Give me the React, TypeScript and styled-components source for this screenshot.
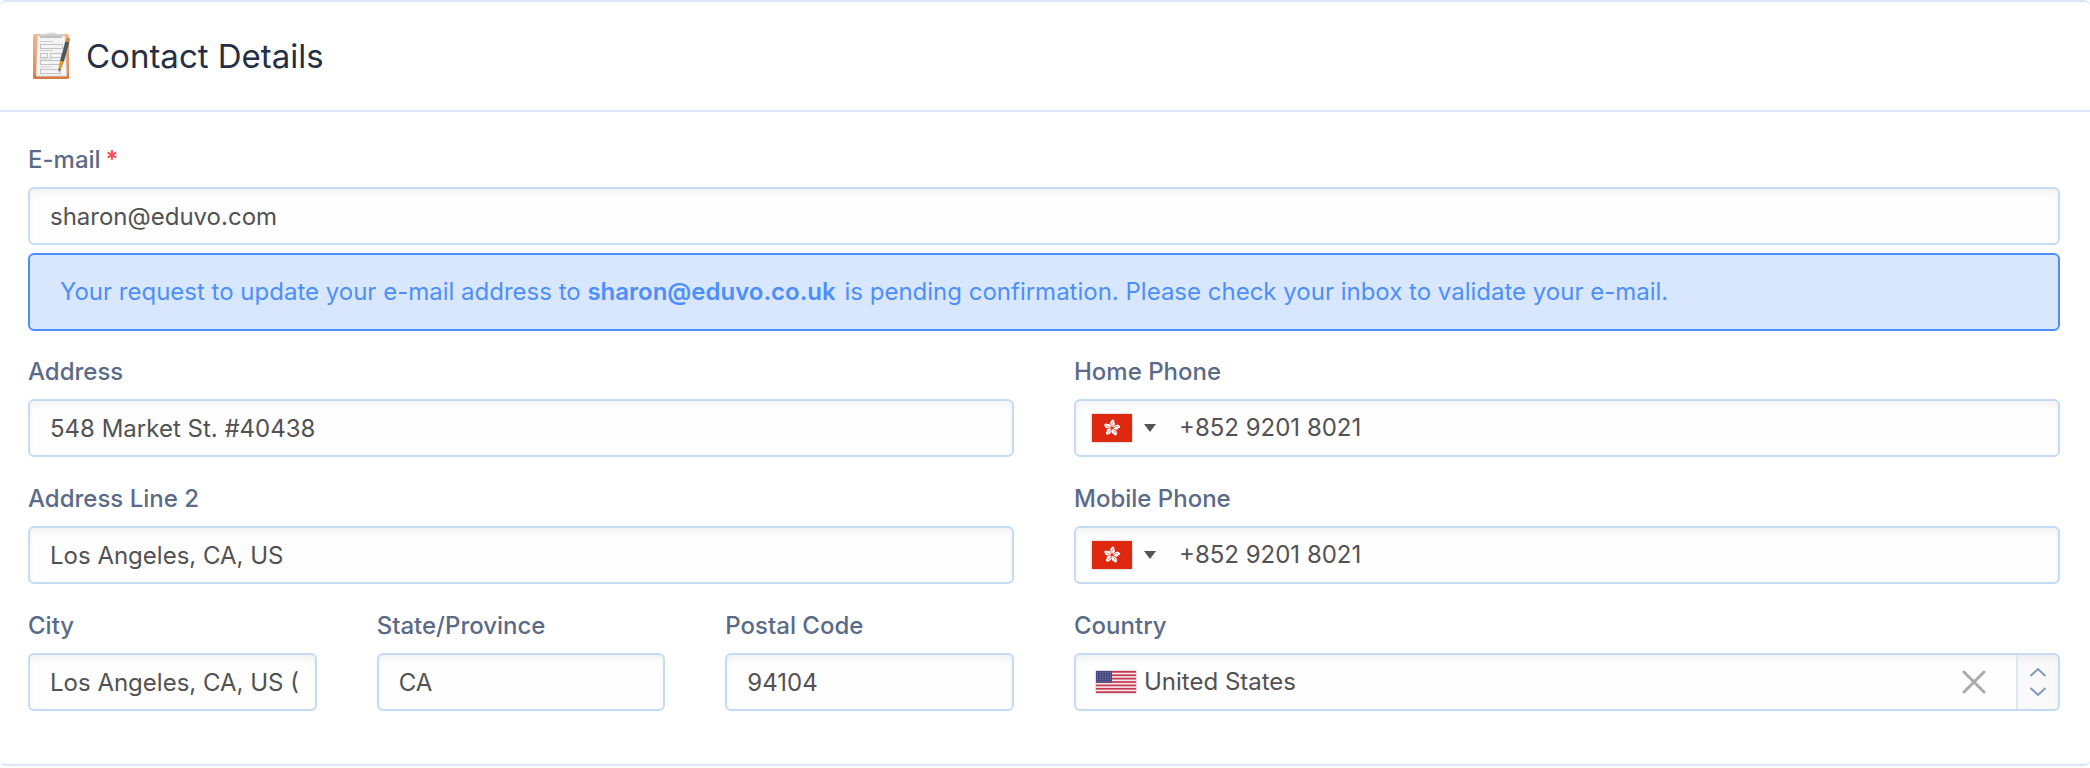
import React, { useState } from "react";
import styled, { createGlobalStyle } from "styled-components";

const GlobalStyle = createGlobalStyle`
  *, *::before, *::after { box-sizing: border-box; }
  body {
    margin: 0;
    background: #ffffff;
    color: #525252;
    font-family: Inter, "Liberation Sans", sans-serif;
    font-size: 24px;
    line-height: 32px;
  }
  button, input, select { font: inherit; color: inherit; margin: 0; }
`;

const Card = styled.section`
  border-top: 2px solid #d9e7f7;
  border-bottom: 2px solid #d9e7f7;
  border-radius: 6px;
  background: #ffffff;
`;

const CardHeader = styled.header`
  display: flex;
  align-items: center;
  gap: 14px;
  padding: 30px 28px 30px 32px;
  border-bottom: 2px solid #d9e7f7;
`;

const Title = styled.h2`
  margin: 0;
  font-size: 33px;
  line-height: 48px;
  font-weight: 400;
  color: #262f45;
`;

const Form = styled.form`
  display: flex;
  flex-direction: column;
  gap: 25px;
  padding: 32px 30px 53px 28px;
`;

const Columns = styled.div<{ $count: number }>`
  display: grid;
  grid-template-columns: repeat(${(p) => p.$count}, minmax(0, 1fr));
  gap: 26px 60px;
`;

const Field = styled.div`
  display: flex;
  flex-direction: column;
  min-width: 0;
`;

const Label = styled.label`
  height: 43px;
  font-weight: 500;
  color: #5a6b88;
`;

const Required = styled.span`
  margin-left: 5px;
  font-weight: 600;
  color: #fb4b50;
`;

const TextInput = styled.input`
  width: 100%;
  height: 58px;
  padding: 0 16px 0 20px;
  border: 2px solid #c3dbf4;
  border-radius: 6px;
  background: #fefefe;
  box-shadow: inset 0 5px 8px -2px rgba(0, 0, 0, 0.06);
  outline-color: #4c8ffb;
`;

const Control = styled.div`
  display: flex;
  align-items: center;
  height: 58px;
  border: 2px solid #c3dbf4;
  border-radius: 6px;
  background: #fefefe;
  box-shadow: inset 0 5px 8px -2px rgba(0, 0, 0, 0.06);
`;

const DialCodeButton = styled.button`
  display: flex;
  align-items: center;
  gap: 12px;
  align-self: stretch;
  padding: 0 12px 0 16px;
  border: 0;
  background: transparent;
`;

const BareInput = styled.input`
  flex: 1;
  min-width: 0;
  align-self: stretch;
  padding: 0 16px 0 11px;
  border: 0;
  background: transparent;
`;

const CountryFlag = styled.span`
  display: flex;
  padding: 0 8px 0 20px;
`;

const BareSelect = styled.select`
  flex: 1;
  min-width: 0;
  align-self: stretch;
  padding: 0;
  border: 0;
  background: transparent;
  appearance: none;
`;

const ClearButton = styled.button`
  display: flex;
  align-items: center;
  align-self: stretch;
  padding: 0 30px;
  border: 0;
  background: transparent;
`;

const StepperButton = styled.button`
  display: flex;
  align-items: center;
  justify-content: center;
  align-self: stretch;
  width: 42px;
  padding: 0;
  border: 0;
  border-left: 2px solid #d9e7f7;
  border-radius: 0 4px 4px 0;
  background: rgba(0, 0, 0, 0.02);
`;

const Notice = styled.p`
  margin: 8px 0 0;
  padding: 21px 30px;
  border: 2px solid #4c8ffb;
  border-radius: 6px;
  background: #d9e7fe;
  color: #4c8ffb;

  strong {
    margin-right: 2px;
    font-weight: 600;
  }
`;

const Svg = styled.svg`
  display: block;
  flex: none;
`;

const FlagSvg = styled(Svg)`
  box-shadow: 0 0 2px rgba(0, 0, 0, 0.35);
`;

function ClipboardIcon() {
  return (
    <Svg width="40" height="48" viewBox="0 0 40 48" aria-hidden="true">
      <defs>
        <linearGradient id="board" x1="0" y1="0" x2="0" y2="1">
          <stop offset="0" stopColor="#f0b990" />
          <stop offset="1" stopColor="#de8048" />
        </linearGradient>
        <linearGradient id="clip" x1="0" y1="0" x2="0" y2="1">
          <stop offset="0" stopColor="#e3e3e3" />
          <stop offset="1" stopColor="#b8b8b8" />
        </linearGradient>
      </defs>
      <rect x="1" y="2" width="36" height="45" rx="2" fill="url(#board)" />
      <path d="M1 44h36v1a2 2 0 0 1-2 2H3a2 2 0 0 1-2-2z" fill="#d67a42" />
      <path d="M5.500 4H33l1.500 40H4.500z" fill="#f4f4f4" stroke="#dedad7" strokeWidth="1" />
      <path d="M8 6V3q0-1 1-1h5q1-1.500 3-1.500h5q2 0 3 1.500h4q1 0 1 1v3z" fill="url(#clip)" />
      <g fill="none" stroke="#c2c2c2" strokeWidth="1">
        <path d="M8 9.500h13M8 18.500h13M8 26.900h12M8 34.900h12" stroke="#cecece" />
        <rect x="8.500" y="12.500" width="22" height="4" />
        <rect x="8.500" y="21.500" width="7" height="4" />
        <rect x="18.500" y="21.500" width="11" height="4" />
        <rect x="8.500" y="28.500" width="20" height="4" />
        <rect x="8.500" y="37.500" width="20" height="4" />
      </g>
      <path d="M34.800 5.500l3.400 1-.9 4-3.900-.8z" fill="#c98a3b" />
      <path d="M33.300 9.500l4 .9-5.500 19.500-3.800-1z" fill="#4c5661" />
      <path d="M28 28.800l3.800 1-2.600 7.200-2.800-.8z" fill="#e39a2d" />
      <path d="M26.400 36.200l2.800.8-2.400 3z" fill="#6b5a48" />
    </Svg>
  );
}

function HongKongFlag() {
  return (
    <FlagSvg width="40" height="28" viewBox="0 0 40 28" aria-hidden="true">
      <rect width="40" height="28" fill="#de2910" />
      {[10, 82, 154, 226, 298].map((angle) => (
        <g key={angle} transform={`translate(20 14) rotate(${angle})`}>
          <path d="M0-1C-3-3-3.800-6.500-.5-8.500 1-8 1.500-7 1-6 3-5.500 2.500-2.500 0-1z" fill="#fff" />
          <path d="M0-1.500Q-1.200-3.500-.6-6" fill="none" stroke="#de2910" strokeWidth=".5" />
        </g>
      ))}
    </FlagSvg>
  );
}

function UnitedStatesFlag() {
  return (
    <FlagSvg width="40" height="22" viewBox="0 0 40 22" aria-hidden="true">
      <rect width="40" height="22" fill="#f5e6e8" />
      <g fill="#c5374f">
        {[0, 1, 2, 3, 4, 5, 6].map((i) => (
          <rect key={i} y={(i * 44) / 13} width="40" height={22 / 13} />
        ))}
      </g>
      <rect width="16" height="11.800" fill="#46467f" />
      <g fill="#8787ad">
        {[0, 1, 2, 3, 4].map((row) =>
          [0, 1, 2, 3, 4, 5].map((col) => (
            <circle key={`${row}-${col}`} cx={1.6 + col * 2.6} cy={1.4 + row * 2.25} r=".55" />
          )),
        )}
      </g>
    </FlagSvg>
  );
}

function PhoneField({ id, label, value }: { id: string; label: string; value: string }) {
  return (
    <Field>
      <Label htmlFor={id}>{label}</Label>
      <Control>
        <DialCodeButton type="button" aria-label={`${label} country code`}>
          <HongKongFlag />
          <Svg width="12" height="8" viewBox="0 0 12 8" aria-hidden="true">
            <path d="M0 0h12L6 8z" fill="#555" />
          </Svg>
        </DialCodeButton>
        <BareInput id={id} type="tel" defaultValue={value} />
      </Control>
    </Field>
  );
}

function TextField({ id, label, value }: { id: string; label: string; value: string }) {
  return (
    <Field>
      <Label htmlFor={id}>{label}</Label>
      <TextInput id={id} type="text" defaultValue={value} />
    </Field>
  );
}

export default function App() {
  const [country, setCountry] = useState("US");

  return (
    <>
      <GlobalStyle />
      <Card>
        <CardHeader>
          <ClipboardIcon />
          <Title>Contact Details</Title>
        </CardHeader>
        <Form>
          <Field>
            <Label htmlFor="email">
              E-mail
              <Required>*</Required>
            </Label>
            <TextInput id="email" type="email" required defaultValue="sharon@eduvo.com" />
            <Notice>
              Your request to update your e-mail address to <strong>sharon@eduvo.co.uk</strong> is
              pending confirmation. Please check your inbox to validate your e-mail.
            </Notice>
          </Field>
          <Columns $count={2}>
            <TextField id="address" label="Address" value="548 Market St. #40438" />
            <PhoneField id="home-phone" label="Home Phone" value="+852 9201 8021" />
            <TextField id="address-2" label="Address Line 2" value="Los Angeles, CA, US" />
            <PhoneField id="mobile-phone" label="Mobile Phone" value="+852 9201 8021" />
            <Columns $count={3}>
              <TextField id="city" label="City" value="Los Angeles, CA, US (" />
              <TextField id="state" label="State/Province" value="CA" />
              <TextField id="postal-code" label="Postal Code" value="94104" />
            </Columns>
            <Field>
              <Label htmlFor="country">Country</Label>
              <Control>
                <CountryFlag>{country && <UnitedStatesFlag />}</CountryFlag>
                <BareSelect
                  id="country"
                  value={country}
                  onChange={(event) => setCountry(event.target.value)}
                >
                  <option value="" />
                  <option value="US">United States</option>
                </BareSelect>
                <ClearButton type="button" aria-label="Clear country" onClick={() => setCountry("")}>
                  <Svg width="24" height="24" viewBox="0 0 24 24" aria-hidden="true">
                    <path
                      d="M2 2l20 20M22 2L2 22"
                      stroke="#aaaaaa"
                      strokeWidth="3"
                      strokeLinecap="round"
                    />
                  </Svg>
                </ClearButton>
                <StepperButton type="button" aria-label="Open country list">
                  <Svg width="18" height="30" viewBox="0 0 18 30" aria-hidden="true">
                    <path
                      d="M1.500 9L9 2l7.500 7M1.500 21L9 28l7.500-7"
                      fill="none"
                      stroke="#8299be"
                      strokeWidth="2"
                    />
                  </Svg>
                </StepperButton>
              </Control>
            </Field>
          </Columns>
        </Form>
      </Card>
    </>
  );
}
